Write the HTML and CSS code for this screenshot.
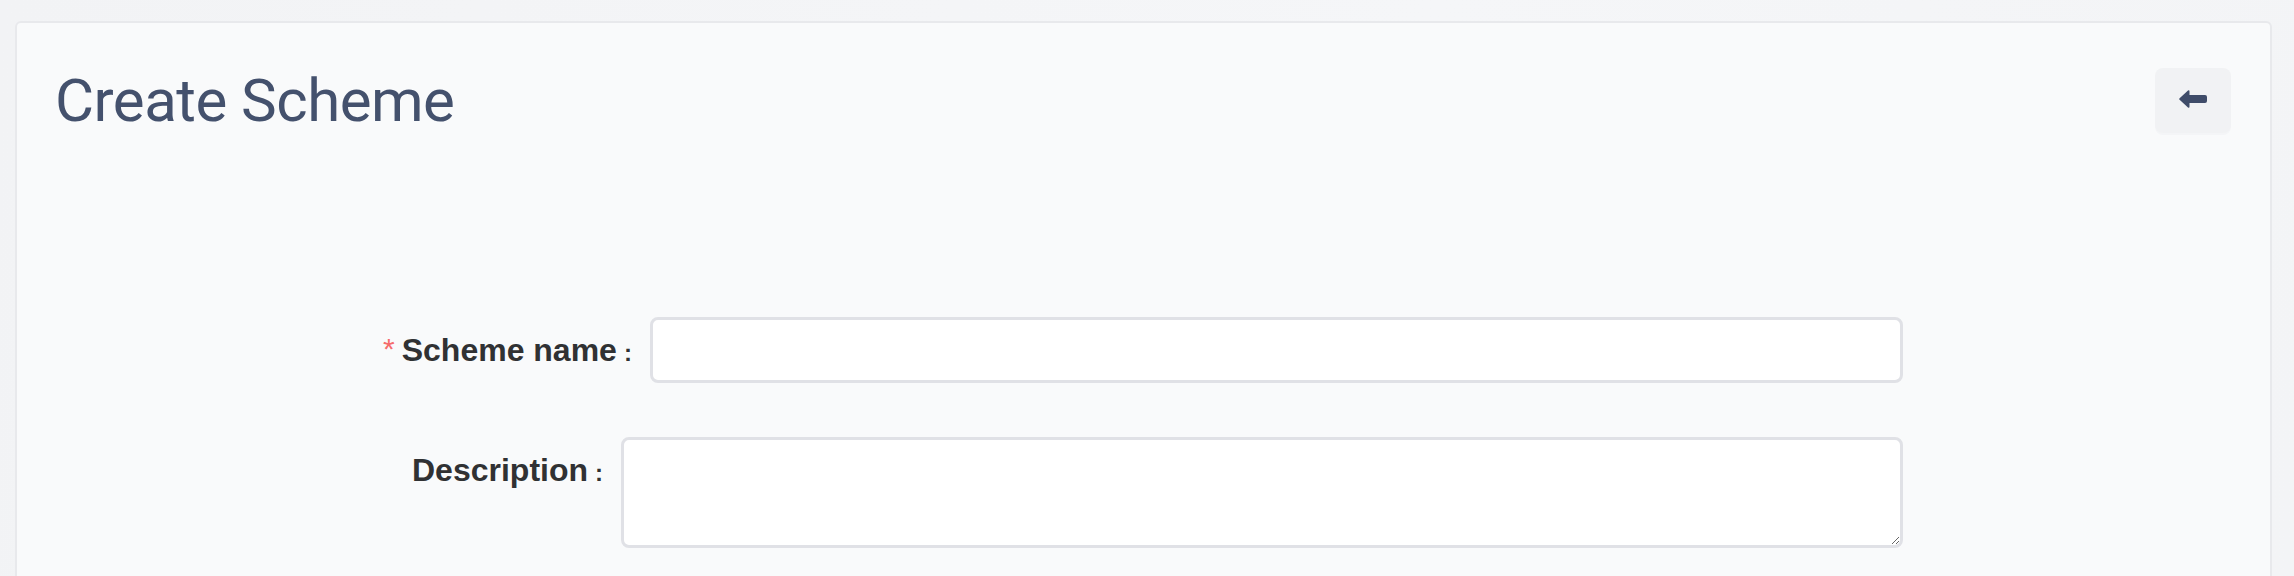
FILE: index.html
```html
<!DOCTYPE html>
<html lang="en">
<head>
<meta charset="utf-8">
<title>Create Scheme</title>
<link rel="stylesheet" href="styles.css">
</head>
<body>
<div class="card">
  <div class="card-header">
    <h1 class="title">Create Scheme</h1>
    <button class="back-btn" type="button" aria-label="Back">
      <svg class="back-icon" width="28" height="18" viewBox="0 0 28 18">
        <path d="M0.6 8.2 L9 0.6 Q10.5 -0.4 10.5 1.6 L10.5 5 L26 5 Q28 5 28 7 L28 11 Q28 13 26 13 L10.5 13 L10.5 16.4 Q10.5 18.4 9 17.4 L0.6 9.8 Q-0.2 9 0.6 8.2 Z" fill="currentColor"/>
      </svg>
    </button>
  </div>
  <form class="form">
    <div class="form-row">
      <label class="form-label"><span class="required">*</span>Scheme name<span class="colon">:</span></label>
      <input class="text-input" type="text">
    </div>
    <div class="form-row form-row--desc">
      <label class="form-label">Description<span class="colon">:</span></label>
      <textarea class="text-area"></textarea>
    </div>
  </form>
</div>
</body>
</html>
```
FILE: styles.css
```css
html, body {
  margin: 0;
  padding: 0;
}
body {
  background: linear-gradient(100deg, #f2f3f5 0%, #f5f6f8 60%, #f3f4f6 100%);
  padding: 21px 22px 0 15px;
  height: 576px;
  box-sizing: border-box;
  overflow: hidden;
  font-family: "Liberation Sans", Arial, sans-serif;
}
.card {
  background: #f9fafb;
  border: 2px solid #e8e9ec;
  border-radius: 6px;
  padding: 42px 39px 40px 38px;
  min-height: 700px;
  box-sizing: border-box;
}
.card-header {
  display: flex;
  align-items: center;
  justify-content: space-between;
}
.title {
  margin: 0;
  font-family: Roboto, "Liberation Sans", sans-serif;
  font-weight: 400;
  font-size: 60px;
  line-height: 72px;
  letter-spacing: -0.5px;
  color: #44516d;
}
.back-btn {
  width: 76px;
  height: 65px;
  border: none;
  border-radius: 8px;
  background: #f1f2f4;
  box-shadow: 0 2px 0 #f4f5f7;
  color: #3f4c69;
  display: flex;
  align-items: center;
  justify-content: center;
  padding: 0;
  margin-top: -2px;
  cursor: pointer;
}
.back-icon {
  display: block;
  margin-top: -3px;
}
.form {
  width: 1520px;
  margin: 180px auto 0;
  display: flex;
  flex-direction: column;
  gap: 54px;
}
.form-row {
  display: flex;
  align-items: flex-start;
}
.form-row--desc {
  padding-left: 29px;
}
.form-label {
  font-weight: 700;
  font-size: 32px;
  line-height: 66px;
  height: 66px;
  color: #303133;
  white-space: nowrap;
}
.required {
  color: #f56c6c;
  font-weight: 400;
  font-size: 30px;
  margin-right: 7px;
  position: relative;
  top: -2px;
}
.colon {
  font-size: 24px;
  font-weight: 700;
  margin-left: 7px;
  margin-right: 18px;
}
.text-input,
.text-area {
  flex: 1;
  min-width: 0;
  box-sizing: border-box;
  background: #ffffff;
  border: 3px solid #e0e1e6;
  border-radius: 8px;
  font-family: "Liberation Sans", Arial, sans-serif;
  font-size: 28px;
  margin: 0;
  outline: none;
}
.text-input {
  height: 66px;
  padding: 0 20px;
}
.text-area {
  height: 111px;
  padding: 10px 20px;
  resize: vertical;
}
```
